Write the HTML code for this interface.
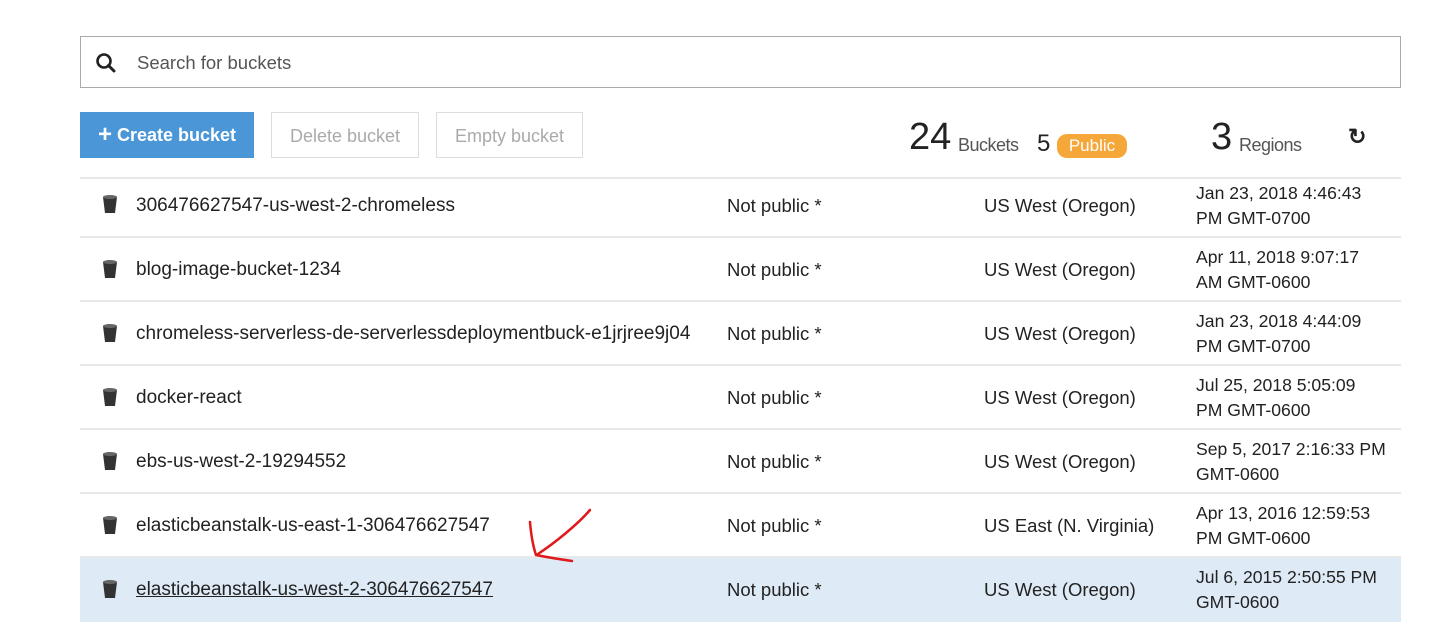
<!DOCTYPE html>
<html><head><meta charset="utf-8"><style>
body{margin:0;width:1437px;height:632px;background:#fff;font-family:"Liberation Sans",Arial,sans-serif;color:#222;position:relative;overflow:hidden}
.a{position:absolute;white-space:nowrap}
.search{left:80px;top:36px;width:1321px;height:52px;border:1px solid #aaa;box-sizing:border-box}
.btn{top:112px;height:46px;box-sizing:border-box;font-size:18px;line-height:46px;text-align:center}
.row{position:absolute;left:80px;width:1321px;height:64px;border-top:2px solid #e8e8e8;box-sizing:border-box;font-size:19px}
.row span{position:absolute;white-space:nowrap}
.n{left:56px;top:16px;font-size:19px}.p{left:647px;top:16px;font-size:18.5px}.r{left:904px;top:16px;font-size:18.5px}.d{left:1116px;top:2px;line-height:25px;font-size:17.6px}
.ic{left:22px;top:15px}
</style></head><body>
<div class="a search"></div>
<svg class="a" style="left:95px;top:52px" width="22" height="22" viewBox="0 0 22 22"><circle cx="9" cy="9" r="6.5" fill="none" stroke="#222" stroke-width="2.6"/><line x1="13.5" y1="13.5" x2="19" y2="19" stroke="#222" stroke-width="3" stroke-linecap="round"/></svg>
<div class="a" style="left:137px;top:52px;font-size:18.5px;color:#555">Search for buckets</div>
<div class="a btn" style="left:80px;width:174px;background:#4a96d6;color:#fff;font-weight:bold"><span style="font-size:24px;vertical-align:-1px">+</span> Create bucket</div>
<div class="a btn" style="left:271px;width:148px;border:1px solid #ddd;color:#aaa">Delete bucket</div>
<div class="a btn" style="left:436px;width:147px;border:1px solid #ddd;color:#aaa">Empty bucket</div>
<div class="a" style="left:909px;top:116px;font-size:38px;color:#222">24</div>
<div class="a" style="left:958px;top:135px;font-size:18px;color:#555;letter-spacing:-0.5px">Buckets</div>
<div class="a" style="left:1037px;top:130px;font-size:24px;color:#222">5</div>
<div class="a" style="left:1057px;top:134px;width:70px;height:24px;border-radius:10px;background:#f5a73a;color:#fff;font-size:17px;line-height:24px;text-align:center">Public</div>
<div class="a" style="left:1211px;top:116px;font-size:38px;color:#222">3</div>
<div class="a" style="left:1239px;top:135px;font-size:18px;color:#555;letter-spacing:-0.5px">Regions</div>
<div class="a" style="left:1348px;top:124px;font-size:22px;font-weight:bold">&#8635;</div>

<div class="row" style="top:177px"><svg class="a ic" width="16" height="20"><path d="M1 3h14l-2 16h-10z" fill="#333"/><ellipse cx="8" cy="3" rx="7" ry="2" fill="#666"/></svg><span class="n">306476627547-us-west-2-chromeless</span><span class="p">Not public *</span><span class="r">US West (Oregon)</span><span class="d">Jan 23, 2018 4:46:43<br>PM GMT-0700</span></div>
<div class="row" style="top:236px"><svg class="a ic" width="16" height="20" style="top:21px"><path d="M1 3h14l-2 16h-10z" fill="#333"/><ellipse cx="8" cy="3" rx="7" ry="2" fill="#666"/></svg><span class="n" style="top:21px">blog-image-bucket-1234</span><span class="p" style="top:21px">Not public *</span><span class="r" style="top:21px">US West (Oregon)</span><span class="d" style="top:7px">Apr 11, 2018 9:07:17<br>AM GMT-0600</span></div>
<div class="row" style="top:300px"><svg class="a ic" width="16" height="20" style="top:21px"><path d="M1 3h14l-2 16h-10z" fill="#333"/><ellipse cx="8" cy="3" rx="7" ry="2" fill="#666"/></svg><span class="n" style="top:21px">chromeless-serverless-de-serverlessdeploymentbuck-e1jrjree9j04</span><span class="p" style="top:21px">Not public *</span><span class="r" style="top:21px">US West (Oregon)</span><span class="d" style="top:7px">Jan 23, 2018 4:44:09<br>PM GMT-0700</span></div>
<div class="row" style="top:364px"><svg class="a ic" width="16" height="20" style="top:21px"><path d="M1 3h14l-2 16h-10z" fill="#333"/><ellipse cx="8" cy="3" rx="7" ry="2" fill="#666"/></svg><span class="n" style="top:21px">docker-react</span><span class="p" style="top:21px">Not public *</span><span class="r" style="top:21px">US West (Oregon)</span><span class="d" style="top:7px">Jul 25, 2018 5:05:09<br>PM GMT-0600</span></div>
<div class="row" style="top:428px"><svg class="a ic" width="16" height="20" style="top:21px"><path d="M1 3h14l-2 16h-10z" fill="#333"/><ellipse cx="8" cy="3" rx="7" ry="2" fill="#666"/></svg><span class="n" style="top:21px">ebs-us-west-2-19294552</span><span class="p" style="top:21px">Not public *</span><span class="r" style="top:21px">US West (Oregon)</span><span class="d" style="top:7px">Sep 5, 2017 2:16:33 PM<br>GMT-0600</span></div>
<div class="row" style="top:492px"><svg class="a ic" width="16" height="20" style="top:21px"><path d="M1 3h14l-2 16h-10z" fill="#333"/><ellipse cx="8" cy="3" rx="7" ry="2" fill="#666"/></svg><span class="n" style="top:21px">elasticbeanstalk-us-east-1-306476627547</span><span class="p" style="top:21px">Not public *</span><span class="r" style="top:21px">US East (N. Virginia)</span><span class="d" style="top:7px">Apr 13, 2016 12:59:53<br>PM GMT-0600</span></div>
<div class="row" style="top:556px;background:#deeaf5;height:66px"><svg class="a ic" width="16" height="20" style="top:21px"><path d="M1 3h14l-2 16h-10z" fill="#333"/><ellipse cx="8" cy="3" rx="7" ry="2" fill="#666"/></svg><span class="n" style="top:21px;text-decoration:underline">elasticbeanstalk-us-west-2-306476627547</span><span class="p" style="top:21px">Not public *</span><span class="r" style="top:21px">US West (Oregon)</span><span class="d" style="top:7px">Jul 6, 2015 2:50:55 PM<br>GMT-0600</span></div>
<svg class="a" style="left:520px;top:500px" width="80" height="70"><path d="M70 10 C58 24 36 42 18 54 M10 22 C11 34 13 46 16 55 C26 57 38 59 52 61" fill="none" stroke="#e0191b" stroke-width="2.5" stroke-linecap="round"/></svg>
</body></html>
